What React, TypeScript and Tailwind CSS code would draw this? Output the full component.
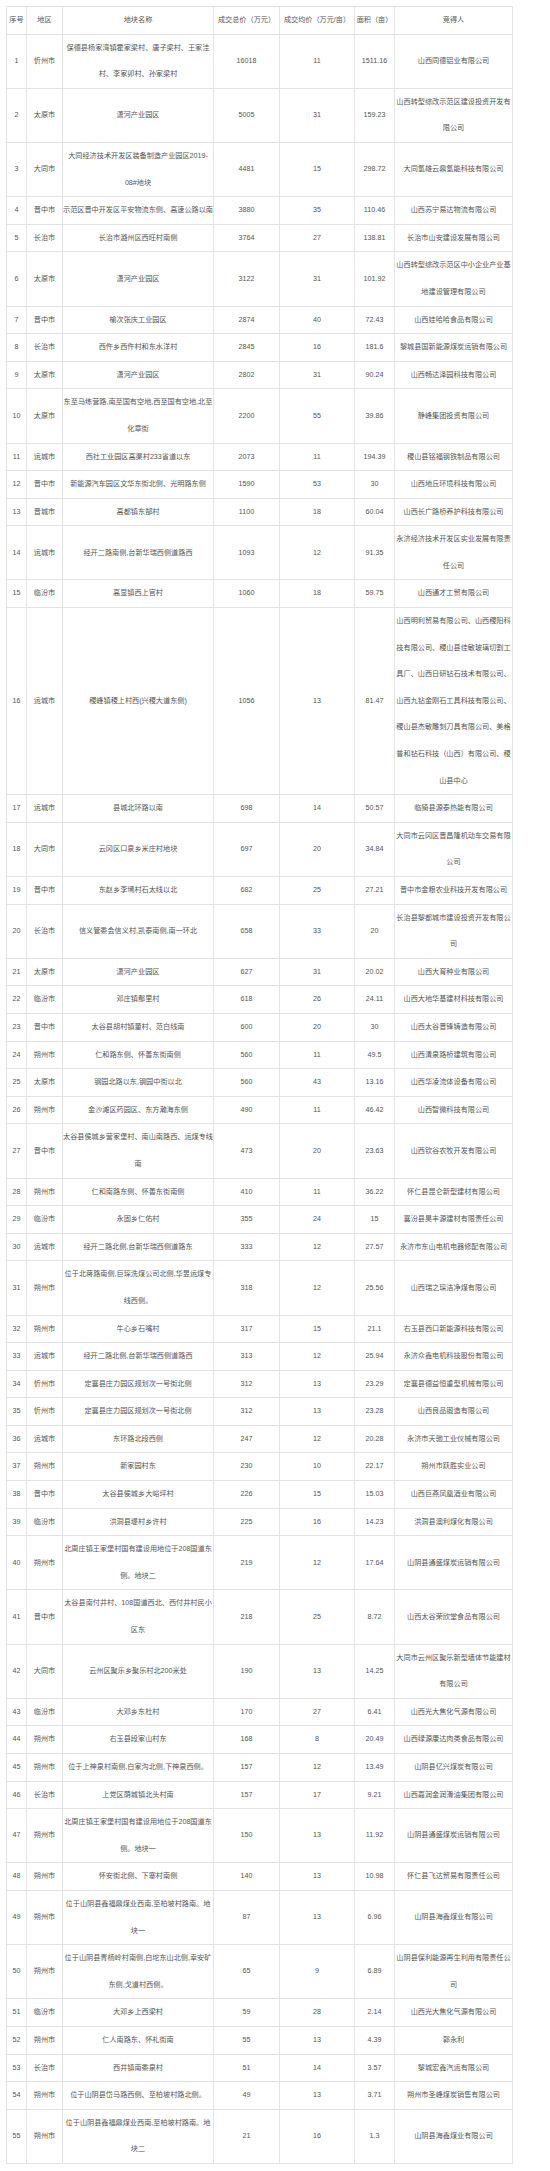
type Row = [string, string, string, string, string, string, string];

const head: Row = ['序号', '地区', '地块名称', '成交总价（万元）', '成交均价（万元/亩）', '面积（亩）', '竞得人'];

// multi-line cells use \n so wrapping matches the source table exactly
const rows: Row[] = [
  ['1', '忻州市', '保德县杨家湾镇霍家梁村、唐子梁村、王家洼\n村、李家卯村、孙家梁村', '16018', '11', '1511.16', '山西同德铝业有限公司'],
  ['2', '太原市', '潇河产业园区', '5005', '31', '159.23', '山西转型综改示范区建设投资开发有\n限公司'],
  ['3', '大同市', '大同经济技术开发区装备制造产业园区2019-\n08#地块', '4481', '15', '298.72', '大同氢雄云鼎氢能科技有限公司'],
  ['4', '晋中市', '示范区晋中开发区平安物流东侧、高速公路以南', '3880', '35', '110.46', '山西苏宁易达物流有限公司'],
  ['5', '长治市', '长治市潞州区西旺村南侧', '3764', '27', '138.81', '长治市山安建设发展有限公司'],
  ['6', '太原市', '潇河产业园区', '3122', '31', '101.92', '山西转型综改示范区中小企业产业基\n地建设管理有限公司'],
  ['7', '晋中市', '榆次张庆工业园区', '2874', '40', '72.43', '山西娃哈哈食品有限公司'],
  ['8', '长治市', '西仵乡西仵村和东水洋村', '2845', '16', '181.6', '黎城县国新能源煤炭运销有限公司'],
  ['9', '太原市', '潇河产业园区', '2802', '31', '90.24', '山西畅达泽园科技有限公司'],
  ['10', '太原市', '东至马练营路,南至国有空地,西至国有空地,北至\n化章街', '2200', '55', '39.86', '静峰集团投资有限公司'],
  ['11', '运城市', '西社工业园区高渠村233省道以东', '2073', '11', '194.39', '稷山县铭福钢铁制品有限公司'],
  ['12', '晋中市', '新能源汽车园区文华东街北侧、光明路东侧', '1590', '53', '30', '山西地丘环境科技有限公司'],
  ['13', '晋城市', '高都镇东郜村', '1100', '18', '60.04', '山西长广路桥养护科技有限公司'],
  ['14', '运城市', '经开二路南侧,台新华瑞西侧道路西', '1093', '12', '91.35', '永济经济技术开发区实业发展有限责\n任公司'],
  ['15', '临汾市', '高显镇西上官村', '1060', '18', '59.75', '山西通才工贸有限公司'],
  ['16', '运城市', '稷峰镇稷上村西(兴稷大道东侧)', '1056', '13', '81.47', '山西明利贸易有限公司、山西稷阳科\n技有限公司、稷山县佳敏玻璃切割工\n具厂、山西日研钻石技术有限公司、\n山西九钻金刚石工具科技有限公司、\n稷山县杰敏雕刻刀具有限公司、美格\n普和钻石科技（山西）有限公司、稷\n山县中心'],
  ['17', '运城市', '县城北环路以南', '698', '14', '50.57', '临猗县源泰热能有限公司'],
  ['18', '大同市', '云冈区口泉乡米庄村地块', '697', '20', '34.84', '大同市云冈区晋昌隆机动车交易有限\n公司'],
  ['19', '晋中市', '东赵乡李墕村石太线以北', '682', '25', '27.21', '晋中市金粮农业科技开发有限公司'],
  ['20', '长治市', '信义管委会信义村,凯泰南侧,南一环北', '658', '33', '20', '长治县黎都城市建设投资开发有限公\n司'],
  ['21', '太原市', '潇河产业园区', '627', '31', '20.02', '山西大育种业有限公司'],
  ['22', '临汾市', '邓庄镇鄢里村', '618', '26', '24.11', '山西大地华基建材科技有限公司'],
  ['23', '晋中市', '太谷县胡村镇董村、范白线南', '600', '20', '30', '山西太谷晋锋铸造有限公司'],
  ['24', '朔州市', '仁和路东侧、怀善东街南侧', '560', '11', '49.5', '山西清泉路桥建筑有限公司'],
  ['25', '太原市', '钢园北路以东,钢园中街以北', '560', '43', '13.16', '山西华凌流体设备有限公司'],
  ['26', '朔州市', '金沙滩区药园区、东方瀚海东侧', '490', '11', '46.42', '山西智微科技有限公司'],
  ['27', '晋中市', '太谷县侯城乡营家堡村、南山南路西、运煤专线\n南', '473', '20', '23.63', '山西钦谷农牧开发有限公司'],
  ['28', '朔州市', '仁和南路东侧、怀善东街南侧', '410', '11', '36.22', '怀仁县昆仑新型建材有限公司'],
  ['29', '临汾市', '永固乡仁佑村', '355', '24', '15', '襄汾县昊丰源建材有限责任公司'],
  ['30', '运城市', '经开二路北侧,台新华瑞西侧道路东', '333', '12', '27.57', '永济市东山电机电器修配有限公司'],
  ['31', '朔州市', '位于北蒋路南侧,巨琛洗煤公司北侧,华昱运煤专\n线西侧。', '318', '12', '25.56', '山西瑞之琛洁净煤有限公司'],
  ['32', '朔州市', '牛心乡石嘴村', '317', '15', '21.1', '右玉县西口新能源科技有限公司'],
  ['33', '运城市', '经开二路北侧,台新华瑞西侧道路西', '313', '12', '25.94', '永济众鑫电机科技股份有限公司'],
  ['34', '忻州市', '定襄县庄力园区规划次一号街北侧', '312', '13', '23.29', '定襄县德益恒重型机械有限公司'],
  ['35', '忻州市', '定襄县庄力园区规划次一号街北侧', '312', '13', '23.28', '山西良品锻造有限公司'],
  ['36', '运城市', '东环路北段西侧', '247', '12', '20.28', '永济市天驰工业仪械有限公司'],
  ['37', '朔州市', '新家园村东', '230', '10', '22.17', '朔州市跃胜实业公司'],
  ['38', '晋中市', '太谷县侯城乡大峪坪村', '226', '15', '15.03', '山西巨燕凤凰酒业有限公司'],
  ['39', '临汾市', '洪洞县堤村乡许村', '225', '16', '14.23', '洪洞县澳利煤化有限公司'],
  ['40', '朔州市', '北周庄镇王家堡村国有建设用地位于208国道东\n侧。地块二', '219', '12', '17.64', '山阴县通盛煤炭运销有限公司'],
  ['41', '晋中市', '太谷县南付井村、108国道西北、西付井村民小\n区东', '218', '25', '8.72', '山西太谷荣欣堂食品有限公司'],
  ['42', '大同市', '云州区聚乐乡聚乐村北200米处', '190', '13', '14.25', '大同市云州区聚乐新型墙体节能建材\n有限公司'],
  ['43', '临汾市', '大邓乡东杜村', '170', '27', '6.41', '山西光大焦化气源有限公司'],
  ['44', '朔州市', '右玉县段家山村东', '168', '8', '20.49', '山西绿源康达肉类食品有限公司'],
  ['45', '朔州市', '位于上神泉村南侧,白家沟北侧,下神泉西侧。', '157', '12', '13.49', '山阴县亿兴煤炭有限公司'],
  ['46', '长治市', '上党区荫城镇北头村南', '157', '17', '9.21', '山西嘉润金润滑油集团有限公司'],
  ['47', '朔州市', '北周庄镇王家堡村国有建设用地位于208国道东\n侧。地块一', '150', '13', '11.92', '山阴县通盛煤炭运销有限公司'],
  ['48', '朔州市', '怀安街北侧、下寨村南侧', '140', '13', '10.98', '怀仁县飞达贸易有限责任公司'],
  ['49', '朔州市', '位于山阴县鑫福鼎煤业西南,至柏坡村路南。地\n块一', '87', '13', '6.96', '山阴县海鑫煤业有限公司'],
  ['50', '朔州市', '位于山阴县青杨岭村南侧,白坨东山北侧,幸安矿\n东侧,戈道村西侧。', '65', '9', '6.89', '山阴县保利能源再生利用有限责任公\n司'],
  ['51', '临汾市', '大邓乡上西梁村', '59', '28', '2.14', '山西光大焦化气源有限公司'],
  ['52', '朔州市', '仁人南路东、怀礼街南', '55', '13', '4.39', '郭永利'],
  ['53', '长治市', '西井镇南委泉村', '51', '14', '3.57', '黎城宏鑫汽运有限公司'],
  ['54', '朔州市', '位于山阴县岱马路西侧、至柏坡村路北侧。', '49', '13', '3.71', '朔州市圣峰煤炭销售有限公司'],
  ['55', '朔州市', '位于山阴县鑫福鼎煤业西南,至柏坡村路南。地\n块二', '21', '16', '1.3', '山阴县海鑫煤业有限公司'],
];

const widths = ['w-[20px]', 'w-[36px]', 'w-[151px]', 'w-[66px]', 'w-[75px]', 'w-[40px]', 'w-[118px]'];

function Cell({ text }: { text: string }) {
  const lines = text.split('\n');
  return (
    <td className="border border-[#e3e3e3] p-0 text-center align-middle whitespace-nowrap">
      {lines.map((l, i) => (
        <span key={i}>
          {i > 0 && <br />}
          {l}
        </span>
      ))}
    </td>
  );
}

export default function App() {
  return (
    <div className="min-h-screen bg-white p-[6px] font-[family-name:'Liberation_Sans','Noto_Sans_CJK_SC',sans-serif] text-[7.15px] leading-[26.6px] text-[#555]">
      <table className="w-[506px] table-fixed border-collapse border border-[#e3e3e3]">
        <colgroup>
          {widths.map((w) => (
            <col key={w} className={w} />
          ))}
        </colgroup>
        <thead>
          <tr>
            {head.map((h) => (
              <Cell key={h} text={h} />
            ))}
          </tr>
        </thead>
        <tbody>
          {rows.map((r) => (
            <tr key={r[0]}>
              {r.map((c, i) => (
                <Cell key={i} text={c} />
              ))}
            </tr>
          ))}
        </tbody>
      </table>
    </div>
  );
}
